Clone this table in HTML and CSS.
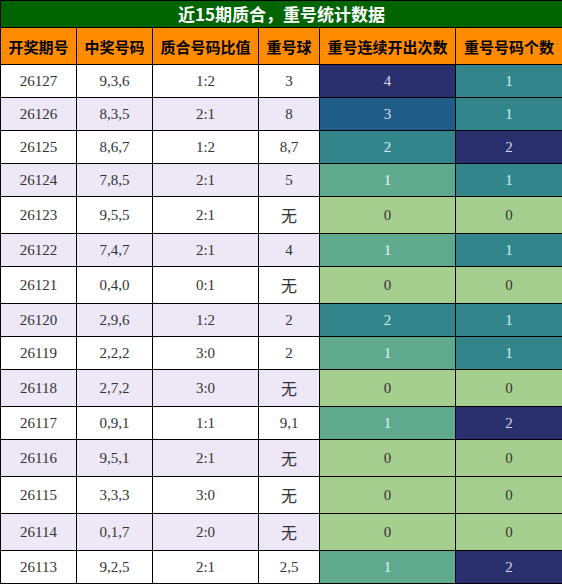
FILE: index.html
```html
<!DOCTYPE html>
<html lang="zh">

<head>
    <meta charset="UTF-8">
    <meta name="viewport" content="width=device-width, initial-scale=1.0">
    <link rel="stylesheet" href="styles.css">
    <title>近15期质合，重号统计数据</title>
</head>

<body>
    <table id="stats">
        <colgroup>
            <col class="c1">
            <col class="c2">
            <col class="c3">
            <col class="c4">
            <col class="c5">
            <col class="c6">
        </colgroup>
        <tr class="title">
            <td colspan="6">近15期质合，重号统计数据</td>
        </tr>
        <tr class="head">
            <td>开奖期号</td>
            <td>中奖号码</td>
            <td>质合号码比值</td>
            <td>重号球</td>
            <td>重号连续开出次数</td>
            <td>重号号码个数</td>
        </tr>
        <tr>
            <td>26127</td><td>9,3,6</td><td>1:2</td><td>3</td>
            <td class="v4">4</td><td class="v2">1</td>
        </tr>
        <tr class="alt">
            <td>26126</td><td>8,3,5</td><td>2:1</td><td>8</td>
            <td class="v3">3</td><td class="v2">1</td>
        </tr>
        <tr>
            <td>26125</td><td>8,6,7</td><td>1:2</td><td>8,7</td>
            <td class="v2">2</td><td class="v4">2</td>
        </tr>
        <tr class="alt">
            <td>26124</td><td>7,8,5</td><td>2:1</td><td>5</td>
            <td class="v1">1</td><td class="v2">1</td>
        </tr>
        <tr class="tall">
            <td>26123</td><td>9,5,5</td><td>2:1</td><td class="none">无</td>
            <td class="v0">0</td><td class="v0">0</td>
        </tr>
        <tr class="alt">
            <td>26122</td><td>7,4,7</td><td>2:1</td><td>4</td>
            <td class="v1">1</td><td class="v2">1</td>
        </tr>
        <tr class="tall">
            <td>26121</td><td>0,4,0</td><td>0:1</td><td class="none">无</td>
            <td class="v0">0</td><td class="v0">0</td>
        </tr>
        <tr class="alt">
            <td>26120</td><td>2,9,6</td><td>1:2</td><td>2</td>
            <td class="v2">2</td><td class="v2">1</td>
        </tr>
        <tr>
            <td>26119</td><td>2,2,2</td><td>3:0</td><td>2</td>
            <td class="v1">1</td><td class="v2">1</td>
        </tr>
        <tr class="alt tall">
            <td>26118</td><td>2,7,2</td><td>3:0</td><td class="none">无</td>
            <td class="v0">0</td><td class="v0">0</td>
        </tr>
        <tr>
            <td>26117</td><td>0,9,1</td><td>1:1</td><td>9,1</td>
            <td class="v1">1</td><td class="v4">2</td>
        </tr>
        <tr class="alt tall">
            <td>26116</td><td>9,5,1</td><td>2:1</td><td class="none">无</td>
            <td class="v0">0</td><td class="v0">0</td>
        </tr>
        <tr class="tall">
            <td>26115</td><td>3,3,3</td><td>3:0</td><td class="none">无</td>
            <td class="v0">0</td><td class="v0">0</td>
        </tr>
        <tr class="alt tall">
            <td>26114</td><td>0,1,7</td><td>2:0</td><td class="none">无</td>
            <td class="v0">0</td><td class="v0">0</td>
        </tr>
        <tr>
            <td>26113</td><td>9,2,5</td><td>2:1</td><td>2,5</td>
            <td class="v1">1</td><td class="v4">2</td>
        </tr>
    </table>
</body>

</html>
```

FILE: styles.css
```css
body {
    margin: 0;
    background-color: white;
}

#stats {
    width: 562px;
    border-collapse: collapse;
    table-layout: fixed;
    font-family: "Liberation Serif", "Noto Sans CJK SC", serif;
    font-size: 15px;
    color: #333;
}

.c1 { width: 76px; }
.c2 { width: 76px; }
.c3 { width: 106px; }
.c4 { width: 61px; }
.c5 { width: 136px; }
.c6 { width: 107px; }

#stats td {
    border: 1px solid black;
    padding: 0;
    text-align: center;
    height: 32px;
}

#stats .tall td {
    height: 36px;
}

.title td {
    background-color: #006400;
    color: white;
    font-family: "Noto Sans CJK SC", sans-serif;
    font-weight: bold;
    font-size: 17px;
    height: 26px !important;
    line-height: 24px;
}

.head td {
    background-color: #ff8c00;
    color: black;
    font-family: "Noto Sans CJK SC", sans-serif;
    font-weight: bold;
    font-size: 15px;
    height: 36px !important;
}

.alt td {
    background-color: #ede7f6;
}

#stats .none {
    font-family: "Noto Sans CJK SC", sans-serif;
    font-size: 16px;
}

#stats .v4 {
    background-color: #2c2f6e;
    color: #d8d8e8;
}

#stats .v3 {
    background-color: #1f5d88;
    color: #d8e0ea;
}

#stats .v2 {
    background-color: #32868b;
    color: #dcecec;
}

#stats .v1 {
    background-color: #5faa8e;
    color: #e6f2ec;
}

#stats .v0 {
    background-color: #a6cf8f;
    color: #333;
}
```
